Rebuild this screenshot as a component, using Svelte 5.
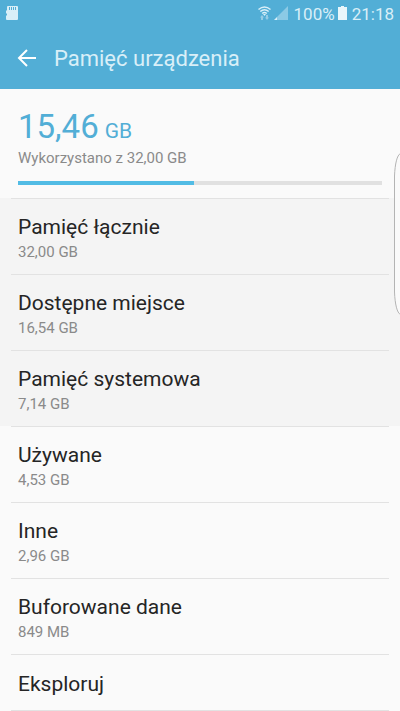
<script>
  let total = 32;
  let used = 15.46;

  const system = [
    { label: "Pamięć łącznie", size: "32,00 GB" },
    { label: "Dostępne miejsce", size: "16,54 GB" },
    { label: "Pamięć systemowa", size: "7,14 GB" }
  ];

  const items = [
    { label: "Używane", size: "4,53 GB" },
    { label: "Inne", size: "2,96 GB" },
    { label: "Buforowane dane", size: "849 MB" },
    { label: "Eksploruj" }
  ];

  const format = value => value.toFixed(2).replace(".", ",");

  $: percent = (used / total) * 100;
</script>

<style>
  :global(body) {
    background: #fafafa;
    font-family: Roboto, "Noto Sans", sans-serif;
    color: #252525;
  }

  header {
    background: #52aed6;
    color: #d9eff8;
  }

  .status {
    display: flex;
    align-items: center;
    justify-content: space-between;
    height: 28px;
    padding: 0 6px;
    font-size: 17px;
  }

  .status svg {
    margin-bottom: 2px;
  }

  .indicators {
    display: flex;
    align-items: center;
  }

  .indicators .percent {
    margin: 0 3px 0 5px;
  }

  .indicators .time {
    margin-left: 5px;
  }

  svg {
    display: block;
  }

  .toolbar {
    display: flex;
    align-items: center;
    height: 61px;
    padding: 0 15px;
    gap: 15px;
  }

  button {
    border: 0;
    padding: 0;
    background: none;
    font: inherit;
    color: inherit;
    text-align: left;
    cursor: pointer;
  }

  h1 {
    margin: 0;
    font-size: 22px;
    font-weight: 400;
    line-height: 28px;
  }

  .summary {
    padding: 21px 18px 13px;
  }

  .used {
    margin: 0;
    font-size: 33px;
    line-height: 34px;
    color: #52aed6;
  }

  .used small {
    margin-left: 6px;
    font-size: 21px;
  }

  .summary label {
    display: block;
    margin-bottom: 13px;
    font-size: 15px;
    line-height: 20px;
    color: #8a8a8a;
  }

  .bar {
    height: 4px;
    background: #e1e1e1;
  }

  .fill {
    height: 100%;
    background: #52bce5;
  }

  ul {
    margin: 0;
    padding: 0 11px;
    list-style: none;
  }

  .system {
    background: #f4f4f4;
  }

  li {
    border-top: 1px solid #e2e2e2;
  }

  .items li:last-child {
    border-bottom: 1px solid #e2e2e2;
  }

  .row {
    display: block;
    box-sizing: border-box;
    width: 100%;
    min-height: 55px;
    padding: 14px 7px 11px;
  }

  .label {
    display: block;
    font-size: 21px;
    line-height: 28px;
  }

  .size {
    display: block;
    font-size: 15px;
    line-height: 22px;
    color: #8a8a8a;
  }

  /* edge panel handle, lies over the list */
  .edge {
    position: absolute;
    top: 152px;
    right: 0;
    width: 6px;
    height: 164px;
  }
</style>

<header>
  <div class="status">
    <svg width="12" height="14" viewBox="0 0 12 14">
      <path fill="#d9eff8" d="M2 0h9a1 1 0 0 1 1 1v12a1 1 0 0 1-1 1H1a1 1 0 0 1-1-1v-3l1-1V8L0 7V5l1-1V1a1 1 0 0 1 1-1z" />
      <path stroke="#52aed6" d="M3.500 1v3M5.500 1v3M7.500 1v3M9.500 1v3" />
    </svg>
    <div class="indicators">
      <svg width="13" height="14" viewBox="0 0 13 14" fill="none">
        <path stroke="#d9eff8" stroke-width="1.500" d="M.5 3.500Q6.500-1.500 12.500 3.500M2.300 5.500Q6.500 2 10.700 5.500M4.200 7.500Q6.500 5.500 8.800 7.500" />
        <path fill="#d9eff8" d="M5 8h3L6.500 10z" />
        <path fill="#96cde6" d="M4 9l2 2.500H5V14H3v-2.500H2zM9 14l-2-2.500h1V9h2v2.500h1z" />
      </svg>
      <svg width="18" height="14" viewBox="0 0 18 14">
        <path fill="#8ccae5" d="M17 0v14H6V11z" />
        <path fill="#d9eff8" d="M6 11v3H3z" />
      </svg>
      <span class="percent">100%</span>
      <svg width="9" height="14" viewBox="0 0 9 14">
        <path fill="#e8f6fb" d="M3 0h3v1h3v13H0V1h3z" />
      </svg>
      <span class="time">21:18</span>
    </div>
  </div>
  <div class="toolbar">
    <button aria-label="Wstecz">
      <svg width="24" height="24" viewBox="0 0 24 24" fill="none" stroke="#fff" stroke-width="2">
        <path d="M21 11H4M12 3l-8 8 8 8" />
      </svg>
    </button>
    <h1>Pamięć urządzenia</h1>
  </div>
</header>

<main>
  <section class="summary">
    <p class="used">{format(used)}<small>GB</small></p>
    <label for="usage">Wykorzystano z {format(total)} GB</label>
    <div class="bar" id="usage" role="progressbar" aria-valuenow={used} aria-valuemin="0" aria-valuemax={total}>
      <div class="fill" style="width: {percent}%"></div>
    </div>
  </section>

  <ul class="system">
    {#each system as item}
      <li>
        <div class="row">
          <span class="label">{item.label}</span>
          <span class="size">{item.size}</span>
        </div>
      </li>
    {/each}
  </ul>

  <ul class="items">
    {#each items as item}
      <li>
        <button class="row">
          <span class="label">{item.label}</span>
          {#if item.size}
            <span class="size">{item.size}</span>
          {/if}
        </button>
      </li>
    {/each}
  </ul>
</main>

<svg class="edge" viewBox="0 0 6 164">
  <path fill="#fafafa" stroke="#b4b4b4" d="M6.500 1.500C3 3 1 12 .5 24v116c.5 12 2.500 21 6 22.500" />
</svg>
